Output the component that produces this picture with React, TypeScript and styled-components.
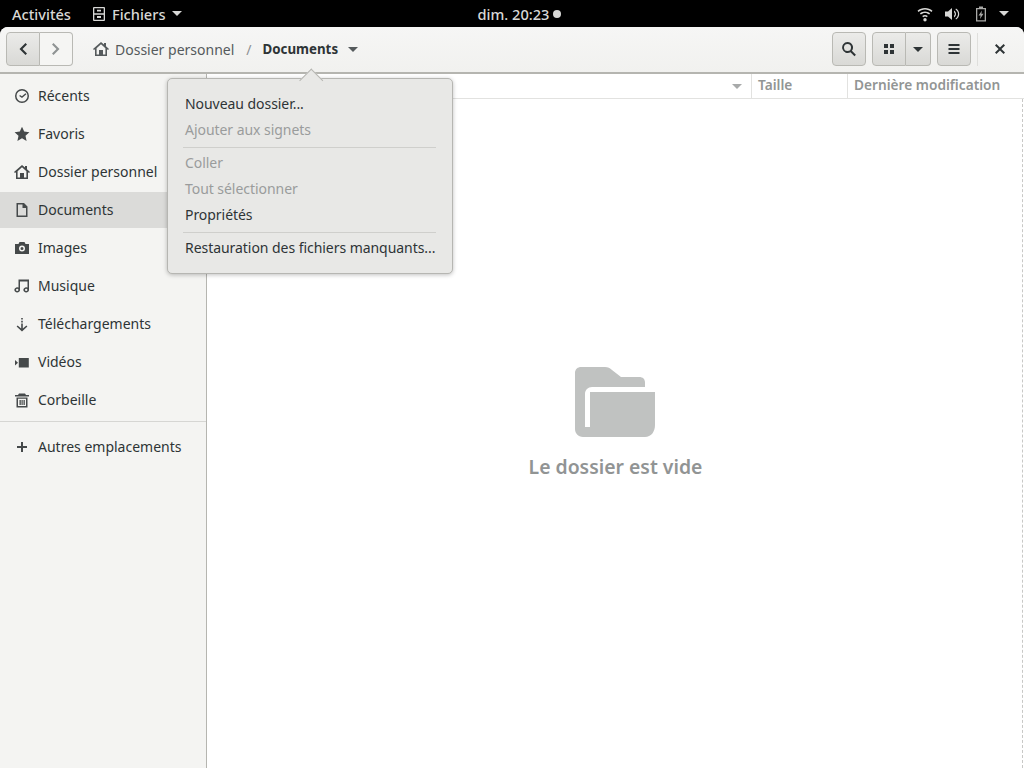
import React from 'react';
import styled, { createGlobalStyle } from 'styled-components';

const GlobalStyle = createGlobalStyle`
  html, body {
    margin: 0;
    padding: 0;
    height: 100%;
    background: #000;
  }
  #root {
    height: 100%;
  }
  * {
    box-sizing: border-box;
  }
`;

const Glyph: React.FC<{ d: string; size?: number; color?: string }> = ({ d, size = 16, color = '#2e3436' }) => (
  <svg width={size} height={size} viewBox="0 0 16 16" fill={color} fillRule="evenodd" style={{ display: 'block' }}>
    <path d={d} />
  </svg>
);

const icons = {
  clock: 'M8 1a7 7 0 1 1 0 14A7 7 0 0 1 8 1zm0 1.500a5.500 5.500 0 1 0 0 11 5.500 5.500 0 0 0 0-11zM11.500 5.200l.9 1L8 10 5.200 8l.8-1.100 1.900 1.300z',
  star: 'M8 .8l2.200 4.800 5.200.6-3.900 3.500 1.100 5.200L8 12.300l-4.600 2.600 1.100-5.200L.6 6.200l5.200-.6z',
  home: 'M8 1l3 2.600V2h2v3.300L16 8l-1 1.100-1-.9V15H2V8.200l-1 .9L0 8zm0 2.300L3.600 7.200V13.500H6V9h4v4.500h2.400V7.200z',
  doc: 'M2.500 1H10l3.500 3.500V15h-11zM4 2.500v11h8V6H8.500V2.500z',
  camera: 'M5.500 2h5l1 2H15v10H1V4h3.500zM8 5.500a3 3 0 1 0 0 6 3 3 0 0 0 0-6zm0 1.500a1.500 1.500 0 1 1 0 3 1.500 1.500 0 0 1 0-3z',
  music: 'M4.500 1.500H15V11.800a2.800 2.600 0 1 1-1.500-2.200V3.500H6v8.300a2.800 2.600 0 1 1-1.500-2.200zM3.200 10.800a1.200 1.100 0 1 0 0 2.200 1.200 1.100 0 0 0 0-2.200zM12.200 10.800a1.200 1.100 0 1 0 0 2.200 1.200 1.100 0 0 0 0-2.200z',
  download: 'M7.200 2h1.600v1.600H7.200zm0 2.800h1.600v1.600H7.200zm0 2.800h1.600v5L12.400 9.400l1 1.100L8 15.500 2.600 10.500l1-1.100 3.600 3.200z',
  video: 'M4.800 4h10v9.500h-10zM1 6l3 2.700-3 2.800z',
  trash: 'M5 1.500h6l1 1.500h3V4.500H1V3h3zM2.500 5.500h11V15.500h-11zM4 6.800V14h8V6.800zM5.500 8H6.800v5H5.500zm2 0h1.200v5H7.500zm2 0h1.300v5H9.500z',
  plus: 'M7 3h2v4h4v2H9v4H7V9H3V7h4z',
  search: 'M6.500 1a5.500 5.500 0 0 1 4.400 8.800l4 4-1.400 1.400-4-4A5.500 5.500 0 1 1 6.500 1zm0 2a3.500 3.500 0 1 0 0 7 3.500 3.500 0 0 0 0-7z',
  grid: 'M3 3h4v4H3zm6 0h4v4H9zM3 9h4v4H3zm6 0h4v4H9z',
  menu: 'M2.500 3h11v2h-11zm0 4h11v2h-11zm0 4h11v2h-11z',
  close: 'M4.400 3L8 6.600 11.600 3 13 4.400 9.400 8 13 11.600 11.600 13 8 9.400 4.400 13 3 11.600 6.600 8 3 4.400z',
  left: 'M10.500 2L12 3.500 7.500 8l4.500 4.500-1.500 1.500-6-6z',
  right: 'M5.500 2L4 3.500 8.500 8 4 12.500 5.500 14l6-6z',
  files: 'M3 1h10a1 1 0 0 1 1 1v12a1 1 0 0 1-1 1H3a1 1 0 0 1-1-1V2a1 1 0 0 1 1-1zm.3 1.300v5h9.400v-5zm0 6.400v5h9.400v-5zM6 3.700h4V5.600H6zm0 6.400h4V12H6z',
  wifi: 'M8 2c2.900 0 5.400 1 7.500 2.800l-1 1.200C12.700 4.400 10.500 3.500 8 3.500S3.300 4.400 1.500 6l-1-1.200C2.600 3 5.100 2 8 2zm0 3.500c2 0 3.700.700 5.100 1.900l-1 1.200C11 7.600 9.600 7 8 7s-3 .6-4.100 1.600l-1-1.200C4.300 6.200 6 5.500 8 5.500zM8 9c1.100 0 2 .4 2.800 1l-1 1.200c-.5-.4-1.100-.7-1.800-.7s-1.300.3-1.800.7l-1-1.200C6 9.400 6.900 9 8 9zm0 3a1.700 1.700 0 1 1 0 3.400A1.700 1.700 0 0 1 8 12z',
  volume: 'M1 5.500h3L8 2v12L4 10.500H1zM10 4.500c1.300.8 2 2 2 3.500s-.7 2.700-2 3.500v-1.800c.5-.4.800-1 .8-1.700s-.3-1.300-.8-1.700zM12 2.500c2 1.200 3.200 3.200 3.200 5.500S14 12.300 12 13.500l-.5-.9c1.500-1.100 2.500-2.700 2.500-4.600s-1-3.500-2.500-4.600z',
  battery: 'M6 0.500h4V2h3v13.500H3V2h3zM4.300 3.300v10.900h7.400V3.300zM9 4.500L5.500 9.500H7.600L7 13l3.500-5.200H8.400z',
};

const iconGrey = '#45494a';

const TopBar = styled.div`
  display: flex;
  align-items: center;
  height: 27px;
  background: #000;
  color: #d8d8d6;
  font: 500 14.600px 'Noto Sans', sans-serif;
`;

const TopLabel = styled.span<{ $left?: number }>`
  margin-left: ${({ $left }) => $left ?? 0}px;
  white-space: nowrap;
`;

const TopIconSlot = styled.span<{ $left: number }>`
  margin-left: ${({ $left }) => $left}px;
`;

const Caret = styled.span<{ $color?: string; $left?: number; $w?: number }>`
  display: block;
  flex: none;
  width: 0;
  height: 0;
  margin-left: ${({ $left }) => $left ?? 0}px;
  border-left: ${({ $w }) => $w ?? 5}px solid transparent;
  border-right: ${({ $w }) => $w ?? 5}px solid transparent;
  border-top: ${({ $w }) => $w ?? 5}px solid ${({ $color }) => $color ?? '#2e3436'};
`;

const RecordDot = styled.span`
  width: 8px;
  height: 8px;
  margin-left: 4px;
  border-radius: 50%;
  background: #d8d8d6;
`;

const TopRight = styled.div`
  display: flex;
  align-items: center;
  margin-left: auto;
  margin-right: 15px;
`;

const Window = styled.div`
  position: relative;
  display: flex;
  flex-direction: column;
  height: 741px;
  overflow: hidden;
  border-radius: 8px 8px 0 0;
  background: #fff;
  color: #2e3436;
  font: 14px 'Noto Sans', sans-serif;
`;

const HeaderBar = styled.header`
  display: flex;
  align-items: center;
  flex: none;
  height: 47px;
  padding: 0 0 1px 6px;
  background: linear-gradient(#f6f6f5, #f1f1ef);
  border-bottom: 2px solid #b5b5b0;
`;

const ButtonGroup = styled.div<{ $left?: number }>`
  display: flex;
  margin-left: ${({ $left }) => $left ?? 0}px;
`;

const ToolButton = styled.button<{ $w?: number; $disabled?: boolean; $pos?: 'first' | 'last' | 'only' }>`
  display: flex;
  align-items: center;
  justify-content: center;
  width: ${({ $w }) => $w ?? 34}px;
  height: 34px;
  padding: 0;
  border: 1px solid #b9b9b4;
  border-left-width: ${({ $pos }) => ($pos === 'last' ? 0 : 1)}px;
  border-radius: ${({ $pos }) =>
    $pos === 'first' ? '4px 0 0 4px' : $pos === 'last' ? '0 4px 4px 0' : '4px'};
  background: ${({ $disabled }) =>
    $disabled ? '#f5f5f3' : 'linear-gradient(#ebebe9, #d9d9d6)'};
`;

const PathBar = styled.nav`
  display: flex;
  align-items: center;
  margin-left: 20px;
  white-space: nowrap;
`;

const Crumb = styled.span`
  margin-left: 6px;
  color: #555a5c;
`;

const Slash = styled.span`
  margin: 0 11px 0 12px;
  color: #8e9192;
`;

const CurrentCrumb = styled.span`
  font-weight: 700;
  font-size: 13.300px;
`;

const HeaderRight = styled.div`
  display: flex;
  align-items: center;
  margin-left: auto;
`;

const HeaderDivider = styled.span`
  width: 1px;
  height: 33px;
  margin: 0 14px 0 6px;
  background: #dfdfdc;
`;

const CloseButton = styled.span`
  display: flex;
  margin-right: 16px;
`;

const Body = styled.div`
  display: flex;
  flex: 1;
  min-height: 0;
`;

const Sidebar = styled.aside`
  flex: none;
  width: 207px;
  padding-top: 4px;
  background: #f4f4f2;
  border-right: 1px solid #b5b5b0;
`;

const PlaceRow = styled.div<{ $selected?: boolean }>`
  display: flex;
  align-items: center;
  gap: 8px;
  height: 36px;
  margin-bottom: 2px;
  padding: 0 0 1px 14px;
  background: ${({ $selected }) => ($selected ? '#dbdbd9' : 'transparent')};
  white-space: nowrap;
`;

const SidebarRule = styled.div`
  height: 1px;
  margin: 3px 0 7px;
  background: #d6d6d3;
`;

const Main = styled.main`
  display: flex;
  flex: 1;
  flex-direction: column;
  min-width: 0;
`;

const ColumnHeader = styled.div`
  display: flex;
  flex: none;
  height: 25px;
  border-bottom: 1px solid #e2e2e0;
  color: #929594;
  font-weight: 600;
  font-size: 13.700px;
`;

const ColumnCell = styled.div<{ $w?: number; $end?: boolean }>`
  display: flex;
  align-items: center;
  justify-content: ${({ $end }) => ($end ? 'flex-end' : 'flex-start')};
  flex: ${({ $w }) => ($w ? `0 0 ${$w}px` : '1')};
  padding: ${({ $end }) => ($end ? '0 9px 0 0' : '0 0 3px 6px')};
  border-right: 1px solid #e2e2e0;
  white-space: nowrap;
  &:last-child {
    border-right: 0;
  }
`;

const EmptyArea = styled.div`
  display: flex;
  flex: 1;
  flex-direction: column;
  align-items: center;
  padding-top: 268px;
  border-right: 1px dashed #c8c8c6;
  margin-right: 1px;
`;

const EmptyTitle = styled.div`
  margin: 16px 0 0 2px;
  color: #919494;
  font-size: 19.400px;
  font-weight: 600;
  line-height: 28px;
`;

const Popover = styled.div`
  position: absolute;
  top: 51px;
  left: 167px;
  width: 286px;
  height: 196px;
  padding: 12px 15px 0 17px;
  background: #e8e8e6;
  border: 1px solid #b6b6b2;
  border-radius: 5px;
  box-shadow: 0 1px 4px rgba(0, 0, 0, 0.25);
  letter-spacing: -0.05px;

  &::before {
    content: '';
    position: absolute;
    top: -7px;
    left: 134.500px;
    width: 15.500px;
    height: 15.500px;
    background: #e8e8e6;
    border-top: 1px solid #b6b6b2;
    border-left: 1px solid #b6b6b2;
    transform: rotate(45deg);
  }
`;

const MenuItem = styled.div<{ $disabled?: boolean }>`
  position: relative;
  height: 26px;
  line-height: 26px;
  color: ${({ $disabled }) => ($disabled ? '#9a9c9c' : '#2e3436')};
  white-space: nowrap;
`;

const MenuRule = styled.div`
  width: 253px;
  height: 1px;
  margin: 4px 0 2px -2px;
  background: #cfcfcc;
`;

const places = [
  { label: 'Récents', icon: icons.clock },
  { label: 'Favoris', icon: icons.star },
  { label: 'Dossier personnel', icon: icons.home },
  { label: 'Documents', icon: icons.doc, selected: true },
  { label: 'Images', icon: icons.camera },
  { label: 'Musique', icon: icons.music },
  { label: 'Téléchargements', icon: icons.download },
  { label: 'Vidéos', icon: icons.video },
  { label: 'Corbeille', icon: icons.trash },
];

const App: React.FC = () => {
  return (
    <>
      <GlobalStyle />
      <TopBar>
        <TopLabel $left={12}>Activités</TopLabel>
        <TopIconSlot $left={20}>
          <Glyph d={icons.files} color="#d8d8d6" />
        </TopIconSlot>
        <TopLabel $left={5}>Fichiers</TopLabel>
        <Caret $color="#d8d8d6" $left={6} />
        <TopLabel $left={296}>dim. 20:23</TopLabel>
        <RecordDot />
        <TopRight>
          <Glyph d={icons.wifi} color="#d8d8d6" />
          <TopIconSlot $left={11}>
            <Glyph d={icons.volume} color="#d8d8d6" />
          </TopIconSlot>
          <TopIconSlot $left={13}>
            <Glyph d={icons.battery} color="#a9a9a7" />
          </TopIconSlot>
          <Caret $color="#d8d8d6" $left={10} />
        </TopRight>
      </TopBar>
      <Window>
        <HeaderBar>
          <ButtonGroup>
            <ToolButton $pos="first">
              <Glyph d={icons.left} />
            </ToolButton>
            <ToolButton $pos="last" $w={33} $disabled>
              <Glyph d={icons.right} color="#8f9393" />
            </ToolButton>
          </ButtonGroup>
          <PathBar>
            <Glyph d={icons.home} color="#555a5c" />
            <Crumb>Dossier personnel</Crumb>
            <Slash>/</Slash>
            <CurrentCrumb>Documents</CurrentCrumb>
            <Caret $color="#555a5c" $left={10} />
          </PathBar>
          <HeaderRight>
            <ToolButton>
              <Glyph d={icons.search} />
            </ToolButton>
            <ButtonGroup $left={6}>
              <ToolButton $pos="first">
                <Glyph d={icons.grid} />
              </ToolButton>
              <ToolButton $pos="last" $w={25}>
                <Caret />
              </ToolButton>
            </ButtonGroup>
            <ButtonGroup $left={6}>
              <ToolButton>
                <Glyph d={icons.menu} />
              </ToolButton>
            </ButtonGroup>
            <HeaderDivider />
            <CloseButton>
              <Glyph d={icons.close} />
            </CloseButton>
          </HeaderRight>
        </HeaderBar>
        <Body>
          <Sidebar>
            {places.map((place) => (
              <PlaceRow key={place.label} $selected={place.selected}>
                <Glyph d={place.icon} color={iconGrey} />
                {place.label}
              </PlaceRow>
            ))}
            <SidebarRule />
            <PlaceRow>
              <Glyph d={icons.plus} color={iconGrey} />
              Autres emplacements
            </PlaceRow>
          </Sidebar>
          <Main>
            <ColumnHeader>
              <ColumnCell $end>
                <Caret $color="#a8aaaa" />
              </ColumnCell>
              <ColumnCell $w={96}>Taille</ColumnCell>
              <ColumnCell $w={176}>Dernière modification</ColumnCell>
            </ColumnHeader>
            <EmptyArea>
              <svg width="80" height="70" viewBox="0 0 80 70" style={{ display: 'block' }}>
                <path
                  fill="#c0c2c1"
                  fillRule="evenodd"
                  d="M6 0H30C33 0 35 1 37 3L46 10H64C68 10 70 12 70 16V20H17C13 20 10 23 10 27V60H15V25H80V58C80 65 76 70 70 70H8C3 70 0 66 0 62V6C0 2 3 0 6 0Z"
                />
              </svg>
              <EmptyTitle>Le dossier est vide</EmptyTitle>
            </EmptyArea>
          </Main>
        </Body>
        <Popover>
          <MenuItem>Nouveau dossier...</MenuItem>
          <MenuItem $disabled>Ajouter aux signets</MenuItem>
          <MenuRule />
          <MenuItem $disabled>Coller</MenuItem>
          <MenuItem $disabled>Tout sélectionner</MenuItem>
          <MenuItem>Propriétés</MenuItem>
          <MenuRule />
          <MenuItem>Restauration des fichiers manquants...</MenuItem>
        </Popover>
      </Window>
    </>
  );
};

export default App;
